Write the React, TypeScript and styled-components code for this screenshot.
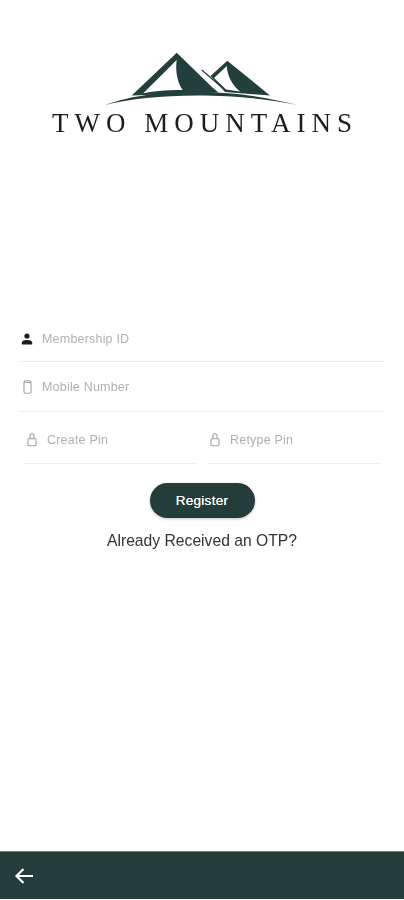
import React from "react";
import styled, { createGlobalStyle } from "styled-components";

const Global = createGlobalStyle`
  html, body { margin: 0; padding: 0; background: #fff; }
  * { box-sizing: border-box; }
`;

const Page = styled.div`
  width: 404px;
  height: 900px;
  display: flex;
  flex-direction: column;
  font-family: "Liberation Sans", Arial, sans-serif;
  overflow: hidden;
`;

const Brand = styled.header`
  height: 322px;
  padding-top: 50px;
  display: flex;
  flex-direction: column;
  align-items: center;
`;

const LogoMark = styled.svg`
  display: block;
  width: 404px;
  height: 60px;
`;

const Wordmark = styled.div`
  margin-top: 0;
  width: 404px;
  padding-left: 52px;
  font-family: "Liberation Serif", "Times New Roman", serif;
  font-size: 27px;
  line-height: 27px;
  letter-spacing: 6px;
  color: #1b1f1e;
  white-space: nowrap;
  filter: blur(0.35px);
`;

const Form = styled.form`
  display: flex;
  flex-direction: column;
  flex: 1;
  padding: 0 19px 0 20px;
`;

const WideField = styled.div<{ $height: number; $lift: number }>`
  height: ${(p) => p.$height}px;
  display: flex;
  align-items: center;
  gap: 9px;
  padding: 0 0 ${(p) => p.$lift}px 1px;
  border-bottom: 1px solid #eeeeee;
`;

const PinRow = styled.div`
  display: flex;
  gap: 11px;
  padding: 0 5px;
`;

const PinField = styled.div`
  flex: 1;
  height: 52px;
  display: flex;
  align-items: center;
  gap: 9px;
  padding: 5px 0 0 1px;
  border-bottom: 1px solid #eeeeee;
`;

const IconSlot = styled.span<{ $muted?: boolean }>`
  width: 12px;
  height: 14px;
  flex: none;
  display: flex;
  align-items: center;
  justify-content: center;
  color: ${(p) => (p.$muted ? "#a3a3a3" : "#1c1c1c")};
`;

const Placeholder = styled.span`
  font-size: 12.5px;
  letter-spacing: 0.2px;
  color: #b0b0b0;
  filter: blur(0.35px);
`;

const Register = styled.button`
  align-self: center;
  margin: 19px 0 0 -1px;
  width: 105px;
  height: 35px;
  border: 0;
  border-radius: 18px;
  background: #243d3b;
  color: #fff;
  font-family: inherit;
  font-size: 13.5px;
  font-weight: 400;
  letter-spacing: 0.3px;
  text-shadow: 0 0 0.5px #fff;
  box-shadow: 0 1px 3px rgba(0, 0, 0, 0.25);
`;

const OtpLink = styled.div`
  margin: 14px 0 0 -1px;
  text-align: center;
  font-size: 15.7px;
  line-height: 18px;
  color: #333;
  filter: blur(0.25px);
`;

const Footer = styled.footer`
  height: 48px;
  margin-bottom: 1px;
  display: flex;
  align-items: center;
  padding-left: 14px;
  background: #243d3b;
  border-top: 1px solid #6f8280;
  color: #fff;
`;

const PersonIcon = () => (
  <svg width="12" height="12" viewBox="0 0 12 12">
    <circle cx="6" cy="3" r="2.6" fill="currentColor" />
    <path d="M0.8 11.5V9.6C0.8 7.8 3.8 7 6 7s5.2.8 5.2 2.6v1.9z" fill="currentColor" />
  </svg>
);

const PhoneIcon = () => (
  <svg width="9" height="14" viewBox="0 0 9 14" fill="none" stroke="currentColor" strokeWidth="1.1">
    <rect x="1" y="0.8" width="7" height="12.4" rx="1.5" />
    <path d="M1 2.4h7" />
  </svg>
);

const LockIcon = () => (
  <svg width="10" height="14" viewBox="0 0 10 14" fill="none" stroke="currentColor" strokeWidth="1.1">
    <rect x="1" y="5.8" width="8" height="7" rx="0.8" />
    <path d="M2.9 5.8V2.9a2.1 2.1 0 0 1 4.2 0v2.9" />
  </svg>
);

const Mountains = () => (
  <LogoMark viewBox="0 50 404 60">
    <path fill="#233f3b" d="M227.3 60.7L210.5 76L225 92L270 95.5Z" />
    <path fill="#fff" d="M226.8 66L214 78L226 89.5L240 91.5C232 85 227 75 226.8 66Z" />
    <path stroke="#233f3b" strokeWidth="1.3" fill="none" d="M201.7 70L225 90" />
    <path fill="#233f3b" d="M176.7 52.7L131.7 95.5L218.5 92.5L211.7 86.7Z" />
    <path fill="#fff" d="M176.7 60L143.3 93.3C150 91.5 165 90 182.7 90C178 84 175 72 176.7 60Z" />
    <path
      fill="#233f3b"
      d="M105 105C125 98 150 92 197 92C235 92 265 97 298 105C265 98.8 235 95.5 197 95.5C160 95.5 130 99 105 105Z"
    />
  </LogoMark>
);

export default function App() {
  return (
    <Page>
      <Global />
      <Brand>
        <Mountains />
        <Wordmark>TWO MOUNTAINS</Wordmark>
      </Brand>
      <Form>
        <WideField $height={40} $lift={6}>
          <IconSlot><PersonIcon /></IconSlot>
          <Placeholder>Membership ID</Placeholder>
        </WideField>
        <WideField $height={50} $lift={0}>
          <IconSlot $muted><PhoneIcon /></IconSlot>
          <Placeholder>Mobile Number</Placeholder>
        </WideField>
        <PinRow>
          <PinField>
            <IconSlot $muted><LockIcon /></IconSlot>
            <Placeholder>Create Pin</Placeholder>
          </PinField>
          <PinField>
            <IconSlot $muted><LockIcon /></IconSlot>
            <Placeholder>Retype Pin</Placeholder>
          </PinField>
        </PinRow>
        <Register type="button">Register</Register>
        <OtpLink>Already Received an OTP?</OtpLink>
      </Form>
      <Footer>
        <svg width="20" height="18" viewBox="0 0 20 18" fill="none" stroke="currentColor" strokeWidth="2.2">
          <path d="M19 9H2.5M9.5 2L2.5 9l7 7" />
        </svg>
      </Footer>
    </Page>
  );
}
